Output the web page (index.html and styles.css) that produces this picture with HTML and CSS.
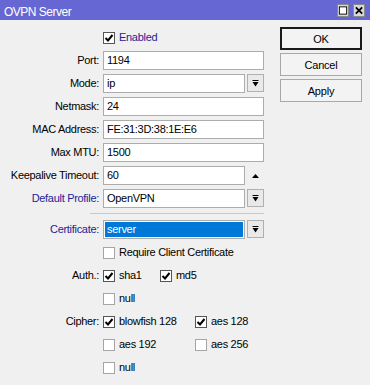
FILE: index.html
```html
<!DOCTYPE html>
<html lang="en">
<head>
    <meta charset="UTF-8">
    <title>OVPN Server</title>
    <link rel="stylesheet" href="styles.css">
</head>
<body>

    <div class="window">
        <div class="titlebar">
            <span class="title">OVPN Server</span>
            <div class="win-btns">
                <span class="wbtn"><svg width="11" height="11" viewBox="0 0 11 11"><rect x="1.5" y="1.5" width="8" height="8" fill="#fff" stroke="#000" stroke-width="1"/></svg></span>
                <span class="wbtn"><svg width="11" height="11" viewBox="0 0 11 11"><path d="M2 2 L9 9 M9 2 L2 9" stroke="#000" stroke-width="2"/></svg></span>
            </div>
        </div>

        <div class="content">
            <div class="form">
                <div class="row">
                    <span></span>
                    <div class="opts">
                        <span class="opt"><span class="cb on"><svg width="10" height="10" viewBox="0 0 10 10"><path d="M1.5 5 L4 7.5 L8.5 2" fill="none" stroke="#000" stroke-width="2"/></svg></span><span class="blue">Enabled</span></span>
                    </div>
                </div>
                <div class="row">
                    <label>Port:</label>
                    <div class="input">1194</div>
                </div>
                <div class="row">
                    <label>Mode:</label>
                    <div class="field">
                        <div class="input">ip</div>
                        <span class="drop"><svg width="7" height="7" viewBox="0 0 7 7"><path d="M0.5 0.5 H6.5" stroke="#000"/><path d="M0.5 2 H6.5 L3.5 6.5 Z" fill="#000"/></svg></span>
                    </div>
                </div>
                <div class="row">
                    <label>Netmask:</label>
                    <div class="input">24</div>
                </div>
                <div class="row">
                    <label>MAC Address:</label>
                    <div class="input">FE:31:3D:38:1E:E6</div>
                </div>
                <div class="row">
                    <label>Max MTU:</label>
                    <div class="input">1500</div>
                </div>
                <div class="row">
                    <label>Keepalive Timeout:</label>
                    <div class="field">
                        <div class="input">60</div>
                        <span class="arrow"><svg width="7" height="4" viewBox="0 0 7 4"><path d="M0 4 L3.5 0 L7 4 Z" fill="#000"/></svg></span>
                    </div>
                </div>
                <div class="row">
                    <label class="blue">Default Profile:</label>
                    <div class="field">
                        <div class="input">OpenVPN</div>
                        <span class="drop"><svg width="7" height="7" viewBox="0 0 7 7"><path d="M0.5 0.5 H6.5" stroke="#000"/><path d="M0.5 2 H6.5 L3.5 6.5 Z" fill="#000"/></svg></span>
                    </div>
                </div>

                <div class="separator"></div>

                <div class="row">
                    <label class="blue">Certificate:</label>
                    <div class="field">
                        <div class="input selected"><span class="sel">server</span></div>
                        <span class="drop"><svg width="7" height="7" viewBox="0 0 7 7"><path d="M0.5 0.5 H6.5" stroke="#000"/><path d="M0.5 2 H6.5 L3.5 6.5 Z" fill="#000"/></svg></span>
                    </div>
                </div>
                <div class="row">
                    <span></span>
                    <div class="opts">
                        <span class="opt"><span class="cb"></span>Require Client Certificate</span>
                    </div>
                </div>
                <div class="row">
                    <label>Auth.:</label>
                    <div class="opts">
                        <span class="opt auth"><span class="cb on"><svg width="10" height="10" viewBox="0 0 10 10"><path d="M1.5 5 L4 7.5 L8.5 2" fill="none" stroke="#000" stroke-width="2"/></svg></span>sha1</span>
                        <span class="opt"><span class="cb on"><svg width="10" height="10" viewBox="0 0 10 10"><path d="M1.5 5 L4 7.5 L8.5 2" fill="none" stroke="#000" stroke-width="2"/></svg></span>md5</span>
                    </div>
                </div>
                <div class="row">
                    <span></span>
                    <div class="opts">
                        <span class="opt"><span class="cb"></span>null</span>
                    </div>
                </div>
                <div class="row">
                    <label>Cipher:</label>
                    <div class="opts">
                        <span class="opt cipher"><span class="cb on"><svg width="10" height="10" viewBox="0 0 10 10"><path d="M1.5 5 L4 7.5 L8.5 2" fill="none" stroke="#000" stroke-width="2"/></svg></span>blowfish 128</span>
                        <span class="opt"><span class="cb on"><svg width="10" height="10" viewBox="0 0 10 10"><path d="M1.5 5 L4 7.5 L8.5 2" fill="none" stroke="#000" stroke-width="2"/></svg></span>aes 128</span>
                    </div>
                </div>
                <div class="row">
                    <span></span>
                    <div class="opts">
                        <span class="opt cipher"><span class="cb"></span>aes 192</span>
                        <span class="opt"><span class="cb"></span>aes 256</span>
                    </div>
                </div>
                <div class="row">
                    <span></span>
                    <div class="opts">
                        <span class="opt"><span class="cb"></span>null</span>
                    </div>
                </div>
            </div>

            <div class="actions">
                <button class="default">OK</button>
                <button>Cancel</button>
                <button>Apply</button>
            </div>
        </div>
    </div>

</body>
</html>
```

FILE: styles.css
```css
/* window */
body {
    margin: 0;
    padding: 0;
    font-family: "Liberation Sans", Arial, sans-serif;
    font-size: 11px;
    letter-spacing: -0.3px;
    color: #000;
    background-color: #f0f0f0;
}

.window {
    width: 370px;
    height: 385px;
    background-color: #f0f0f0;
    overflow: hidden;
}

.titlebar {
    height: 20px;
    background-color: #6767d3;
    display: flex;
    justify-content: space-between;
}

.title {
    color: white;
    font-size: 12px;
    letter-spacing: -0.5px;
    line-height: 14px;
    padding: 5px 0 0 4px;
}

.win-btns {
    display: flex;
    gap: 4px;
    padding: 4px 5px 0 0;
}

.wbtn {
    width: 12px;
    height: 13px;
    box-sizing: border-box;
    background-color: #d9d9d9;
    border: 1px solid #8a8a8a;
    display: flex;
    justify-content: center;
    align-items: center;
}

.content {
    display: flex;
}

/* form */
.form {
    display: flex;
    flex-direction: column;
    gap: 4px;
    padding-top: 8px;
}

.row {
    display: grid;
    grid-template-columns: 99px 161px;
    column-gap: 4px;
    height: 19px;
    line-height: 19px;
}

.row label {
    text-align: right;
    white-space: nowrap;
}

.blue {
    color: #22229a;
}

.field {
    display: flex;
    gap: 2px;
}

.field .input {
    width: 142px;
}

.input {
    box-sizing: border-box;
    height: 19px;
    line-height: 17px;
    background-color: white;
    border: 1px solid #acacac;
    padding-left: 3px;
    white-space: nowrap;
}

.input.selected {
    padding: 1px;
}

.sel {
    display: block;
    height: 15px;
    line-height: 15px;
    background-color: #0078d7;
    color: white;
    padding-left: 2px;
}

.drop {
    width: 17px;
    height: 18px;
    box-sizing: border-box;
    background-color: #e9e9e9;
    border: 1px solid #b0b0b0;
    display: flex;
    justify-content: center;
    align-items: center;
}

.arrow {
    width: 17px;
    display: flex;
    justify-content: center;
    align-items: center;
}

.separator {
    height: 1px;
    margin: 1px 0 2px 90px;
    width: 174px;
    background-color: #c8c8c8;
}

/* checkboxes */
.opts {
    display: flex;
    align-items: center;
}

.opt {
    display: flex;
    align-items: center;
    gap: 4px;
    white-space: nowrap;
}

.opt.auth {
    width: 57px;
}

.opt.cipher {
    width: 92px;
}

.cb {
    width: 12px;
    height: 12px;
    box-sizing: border-box;
    background-color: white;
    border: 1px solid #a5a5a5;
    display: flex;
    justify-content: center;
    align-items: center;
}

.cb.on {
    border-color: #555;
}

/* buttons */
.actions {
    display: flex;
    flex-direction: column;
    gap: 3px;
    width: 82px;
    margin-left: auto;
    margin-right: 8px;
    padding-top: 7px;
}

button {
    height: 23px;
    font-family: "Liberation Sans", Arial, sans-serif;
    font-size: 11px;
    letter-spacing: -0.2px;
    color: #000;
    background-color: #f3f3f3;
    border: 1px solid #a8a8a8;
    padding: 0;
}

button.default {
    border: 2px solid #1a1a1a;
}
```
